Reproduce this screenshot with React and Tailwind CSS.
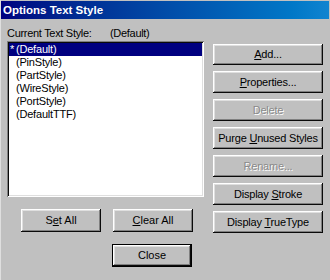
import React from "react";

const raised =
  "shadow-[inset_-1px_-1px_#0a0a0a,inset_1px_1px_#ffffff,inset_-2px_-2px_#808080,inset_2px_2px_#dfdfdf]";

function Btn({ children, disabled, def, className = "" }) {
  return (
    <div
      className={`flex items-center justify-center bg-[#c0c0c0] ${
        def
          ? "border border-black shadow-[inset_-1px_-1px_#0a0a0a,inset_1px_1px_#ffffff,inset_-2px_-2px_#808080,inset_2px_2px_#dfdfdf]"
          : raised
      } ${
        disabled
          ? "text-[#8a8a8a] [text-shadow:1px_1px_0_#ffffff]"
          : "text-black"
      } ${className}`}
    >
      <span className="whitespace-pre">{children}</span>
    </div>
  );
}

const U = ({ children }) => <span className="underline underline-offset-[1px]">{children}</span>;

export default function App() {
  const items = [
    ["*", "(Default)"],
    ["", "(PinStyle)"],
    ["", "(PartStyle)"],
    ["", "(WireStyle)"],
    ["", "(PortStyle)"],
    ["", "(DefaultTTF)"],
  ];
  return (
    <div
      className="w-[330px] h-[280px] bg-[#c0c0c0] text-[11px] leading-[13px] text-black border-l border-[#dfdfdf] overflow-hidden"
      style={{ fontFamily: '"Liberation Sans", Arial, sans-serif' }}
    >
      <div className="h-[18px] mt-[1px] mr-[1px] flex items-center pl-[2px] bg-gradient-to-r from-[#000080] to-[#1084d0] text-white font-bold text-[11.5px]">
        Options Text Style
      </div>
      <div className="flex pl-[6px] pt-[8px]">
        <div className="w-[197px] flex flex-col">
          <div className="h-[14px] flex items-start tracking-[-0.3px]">
            <span className="w-[103px]">Current Text Style:</span>
            <span>(Default)</span>
          </div>
          <div className="h-[156px] bg-white p-[2px] shadow-[inset_1px_1px_#808080,inset_-1px_-1px_#ffffff,inset_2px_2px_#0a0a0a,inset_-2px_-2px_#dfdfdf] tracking-[-0.2px]">
            {items.map(([p, t], i) => (
              <div
                key={t}
                className={`h-[13px] flex items-center ${
                  i === 0 ? "bg-[#000080] text-white" : ""
                }`}
              >
                <span className="w-[7px] pl-[1px]">{p}</span>
                <span>{t}</span>
              </div>
            ))}
          </div>
          <div className="flex mt-[12px] pl-[14px] gap-[12px]">
            <Btn className="w-[80px] h-[23px]">
              S<U>e</U>t All
            </Btn>
            <Btn className="w-[80px] h-[23px]">
              <U>C</U>lear All
            </Btn>
          </div>
          <div className="flex mt-[12px] pl-[105px]">
            <Btn def className="w-[80px] h-[23px]">
              Close
            </Btn>
          </div>
        </div>
        <div className="ml-[9px] mt-[17px] w-[110px] flex flex-col gap-[6px] tracking-[-0.2px]">
          <Btn className="h-[21px]">
            <U>A</U>dd...
          </Btn>
          <Btn className="h-[22px]">
            <U>P</U>roperties...
          </Btn>
          <Btn disabled className="h-[22px]">
            Delete
          </Btn>
          <Btn className="h-[22px]">
            {"Purge "}<U>U</U>{"nused Styles"}
          </Btn>
          <Btn disabled className="h-[22px]">
            Rename...
          </Btn>
          <Btn className="h-[22px]">
            {"Display "}<U>S</U>{"troke"}
          </Btn>
          <Btn className="h-[22px]">
            {"Display "}<U>T</U>{"rueType"}
          </Btn>
        </div>
      </div>
    </div>
  );
}
